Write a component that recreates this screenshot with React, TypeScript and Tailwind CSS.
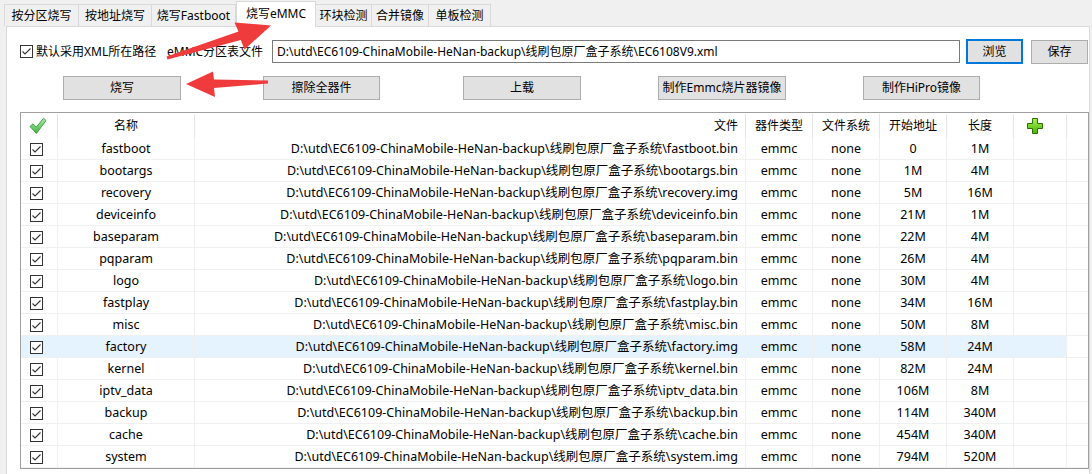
import React from 'react';

const PREFIX = 'D:\\utd\\EC6109-ChinaMobile-HeNan-backup\\线刷包原厂盒子系统\\';

type Part = { name: string; file: string; start: string; size: string };

const parts: Part[] = [
  { name: 'fastboot', file: 'fastboot.bin', start: '0', size: '1M' },
  { name: 'bootargs', file: 'bootargs.bin', start: '1M', size: '4M' },
  { name: 'recovery', file: 'recovery.img', start: '5M', size: '16M' },
  { name: 'deviceinfo', file: 'deviceinfo.bin', start: '21M', size: '1M' },
  { name: 'baseparam', file: 'baseparam.bin', start: '22M', size: '4M' },
  { name: 'pqparam', file: 'pqparam.bin', start: '26M', size: '4M' },
  { name: 'logo', file: 'logo.bin', start: '30M', size: '4M' },
  { name: 'fastplay', file: 'fastplay.bin', start: '34M', size: '16M' },
  { name: 'misc', file: 'misc.bin', start: '50M', size: '8M' },
  { name: 'factory', file: 'factory.img', start: '58M', size: '24M' },
  { name: 'kernel', file: 'kernel.bin', start: '82M', size: '24M' },
  { name: 'iptv_data', file: 'iptv_data.bin', start: '106M', size: '8M' },
  { name: 'backup', file: 'backup.bin', start: '114M', size: '340M' },
  { name: 'cache', file: 'cache.bin', start: '454M', size: '340M' },
  { name: 'system', file: 'system.img', start: '794M', size: '520M' },
];

const tabs = [
  { label: '按分区烧写', w: 'w-[75px]' },
  { label: '按地址烧写', w: 'w-[73px]' },
  { label: '烧写Fastboot', w: 'w-[84px]' },
  { label: '烧写eMMC', w: 'w-[80px]', active: true },
  { label: '环块检测', w: 'w-[56px]' },
  { label: '合并镜像', w: 'w-[57px]' },
  { label: '单板检测', w: 'w-[62px]' },
];

function CheckBox() {
  return (
    <span className="flex h-[13px] w-[13px] shrink-0 items-center justify-center border border-[#333333] bg-white">
      <svg width="11" height="11" viewBox="0 0 11 11">
        <path d="M1.5 5.5 L4 8 L9.5 2.5" fill="none" stroke="#333333" strokeWidth="1.1" />
      </svg>
    </span>
  );
}

function GreenTick() {
  return (
    <svg width="18" height="18" viewBox="0 0 18 18">
      <defs>
        <linearGradient id="tickg" x1="0" y1="0" x2="0" y2="1">
          <stop offset="0" stopColor="#a6eaa6" />
          <stop offset="1" stopColor="#43b543" />
        </linearGradient>
      </defs>
      <path
        d="M1 9.5 L4 6.8 L7.2 10.2 L14.5 1.2 L17 3.6 L7.4 16.5 Z"
        fill="url(#tickg)"
        stroke="#3a9a3a"
        strokeWidth="0.9"
        strokeLinejoin="round"
      />
    </svg>
  );
}

function GreenPlus() {
  return (
    <svg width="16" height="16" viewBox="0 0 16 16">
      <defs>
        <linearGradient id="plusg" x1="0" y1="0" x2="0" y2="1">
          <stop offset="0" stopColor="#a8f05a" />
          <stop offset="1" stopColor="#48b400" />
        </linearGradient>
      </defs>
      <path
        d="M5.5 0.5 H10.5 V5.5 H15.5 V10.5 H10.5 V15.5 H5.5 V10.5 H0.5 V5.5 H5.5 Z"
        fill="url(#plusg)"
        stroke="#2c6e00"
        strokeWidth="1"
      />
    </svg>
  );
}

function Btn({ children, className }: { children: React.ReactNode; className: string }) {
  return (
    <div
      className={`flex h-[24px] shrink-0 items-center justify-center border border-[#adadad] bg-[#e1e1e1] ${className}`}
    >
      {children}
    </div>
  );
}

const col = {
  chk: 'w-[37px] shrink-0',
  name: 'w-[137px] shrink-0',
  file: 'w-[551px] shrink-0',
  num: 'w-[67px] shrink-0',
  plus: 'w-[53px] shrink-0',
};

export default function App() {
  return (
    <div
      className="relative h-[474px] w-[1092px] overflow-hidden bg-[#f0f0f0] text-[12px] text-black"
      style={{ fontFamily: '"Noto Sans", "Noto Sans CJK SC", sans-serif' }}
    >
      {/* tab strip */}
      <div className="flex h-[26px] items-end pl-[4px]">
        {tabs.map((t) =>
          t.active ? (
            <div
              key={t.label}
              className={`relative z-10 -mb-[1px] flex h-[26px] items-center justify-center border border-b-0 border-[#d9d9d9] bg-white pb-[2px] ${t.w}`}
            >
              {t.label}
            </div>
          ) : (
            <div
              key={t.label}
              className={`flex h-[22px] items-center justify-center border border-b-0 border-l-0 border-[#d9d9d9] first:border-l ${t.w}`}
            >
              {t.label}
            </div>
          ),
        )}
      </div>

      {/* page */}
      <div className="ml-[6px] mr-[2px] flex h-[448px] flex-col border-l border-r border-t border-[#d9d9d9] bg-white">
        <div className="mt-[12px] flex h-[25px] items-center">
          <div className="ml-[13px]">
            <CheckBox />
          </div>
          <span className="ml-[3px] w-[131px] shrink-0">默认采用XML所在路径</span>
          <span className="w-[105px] shrink-0">eMMC分区表文件</span>
          <div className="flex h-[23px] w-[688px] shrink-0 items-center border border-[#7a7a7a] pl-[4px]">
            {PREFIX}EC6108V9.xml
          </div>
          <div className="ml-[6px] flex h-[25px] w-[57px] items-center justify-center border-2 border-[#0078d7] bg-[#e1e1e1]">
            浏览
          </div>
          <Btn className="ml-[8px] w-[57px]">保存</Btn>
        </div>

        <div className="mt-[12px] flex">
          <Btn className="ml-[56px] w-[118px]">烧写</Btn>
          <Btn className="ml-[82px] w-[117px]">擦除全器件</Btn>
          <Btn className="ml-[83px] w-[118px]">上载</Btn>
          <Btn className="ml-[77px] w-[128px]">制作Emmc烧片器镜像</Btn>
          <Btn className="ml-[77px] w-[117px]">制作HiPro镜像</Btn>
        </div>

        {/* partition list */}
        <div className="ml-[13px] mt-[12px] flex h-[357px] w-[1069px] flex-col border border-[#a0a0a0]">
          <div className="flex h-[25px] shrink-0 pt-[1px]">
            <div className={`${col.chk} flex items-center justify-center border-r border-[#e5e5e5] pr-[2px]`}>
              <GreenTick />
            </div>
            <div className={`${col.name} flex items-center justify-center border-r border-[#e5e5e5]`}>名称</div>
            <div className={`${col.file} flex items-center justify-end border-r border-[#e5e5e5] pr-[7px]`}>文件</div>
            <div className={`${col.num} flex items-center justify-center border-r border-[#e5e5e5]`}>器件类型</div>
            <div className={`${col.num} flex items-center justify-center border-r border-[#e5e5e5]`}>文件系统</div>
            <div className={`${col.num} flex items-center justify-center border-r border-[#e5e5e5]`}>开始地址</div>
            <div className={`${col.num} flex items-center justify-center border-r border-[#e5e5e5]`}>长度</div>
            <div className={`${col.plus} flex items-center border-r border-[#e5e5e5] pl-[13px]`}>
              <GreenPlus />
            </div>
            <div className="flex-1" />
          </div>

          {parts.map((p) => {
            const hi = p.name === 'factory';
            const cell = `flex items-center border-b border-r border-[#f0f0f0] pt-[1px] ${hi ? 'bg-[#e5f3ff]' : ''}`;
            return (
              <div key={p.name} className="flex h-[22px] shrink-0 text-[12.5px]">
                <div className={`${col.chk} ${cell} pl-[9px]`}>
                  <CheckBox />
                </div>
                <div className={`${col.name} ${cell} justify-center`}>{p.name}</div>
                <div className={`${col.file} ${cell} justify-end whitespace-nowrap pr-[7px]`}>
                  {PREFIX}
                  {p.file}
                </div>
                <div className={`${col.num} ${cell} justify-center`}>emmc</div>
                <div className={`${col.num} ${cell} justify-center`}>none</div>
                <div className={`${col.num} ${cell} justify-center`}>{p.start}</div>
                <div className={`${col.num} ${cell} justify-center`}>{p.size}</div>
                <div className={`${col.plus} ${cell}`} />
                <div className="flex-1 border-b border-[#f0f0f0]" />
              </div>
            );
          })}
        </div>
      </div>

      {/* annotation arrows */}
      <svg className="pointer-events-none absolute inset-0 z-20" width="1092" height="474">
        <polygon
          points="166.5,56.5 167.5,59.5 240.8,40 244.5,49.5 271,25.5 234.5,22.5 238.5,31.5"
          fill="#ef3b3b"
        />
        <polygon
          points="268,80.5 268,83.5 214,88 215,97 186,84 213,71.5 214,79.5"
          fill="#ef3b3b"
        />
      </svg>
    </div>
  );
}
